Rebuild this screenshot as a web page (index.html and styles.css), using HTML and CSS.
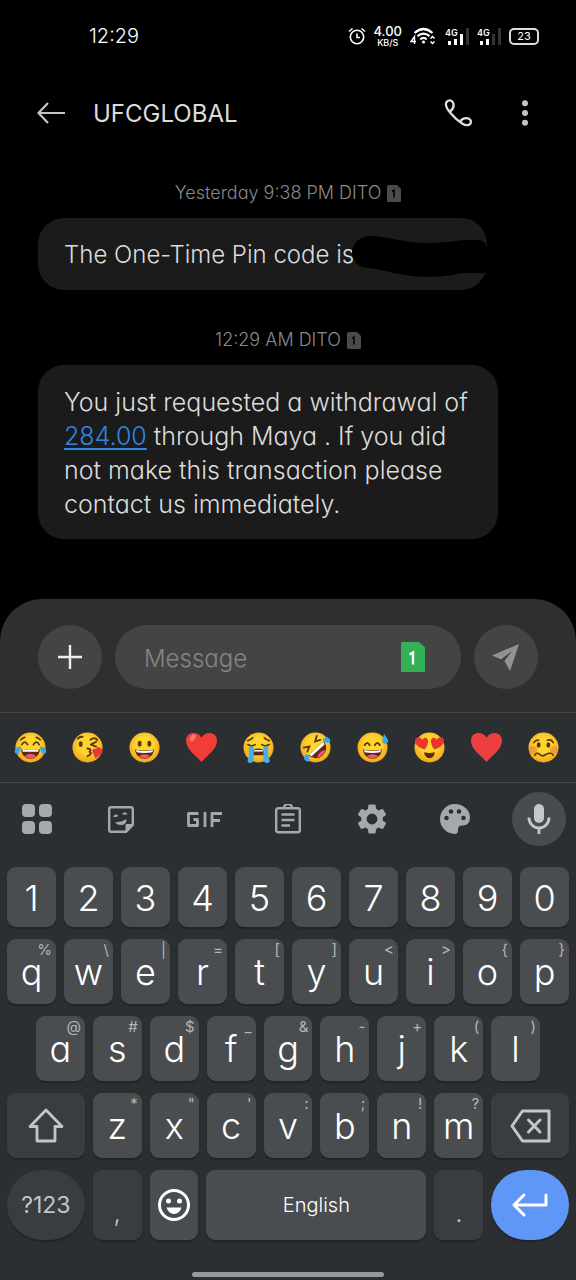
FILE: index.html
```html
<!DOCTYPE html>
<html lang="en">
<head>
<meta charset="utf-8">
<meta name="viewport" content="width=device-width, initial-scale=1">
<title>UFCGLOBAL</title>
<link rel="stylesheet" href="styles.css">
</head>
<body>
<svg class="defs" aria-hidden="true">
  <defs>
    <radialGradient id="skin" cx="50%" cy="42%" r="56%"><stop offset="0.5" stop-color="#fdd52d"/><stop offset="1" stop-color="#f3a81d"/></radialGradient>
    <symbol id="face" viewBox="0 0 32 32"><circle cx="16" cy="16" r="15.500" fill="url(#skin)"/></symbol>
    <symbol id="sim" viewBox="0 0 14 17"><path d="M1.500 0H10L14 4V15.500Q14 17 12.500 17H1.500Q0 17 0 15.500V1.500Q0 0 1.500 0Z" fill="#4a4a4a"/><path d="M5 6.500L7 5.200V12.500" fill="none" stroke="#080808" stroke-width="1.700"/></symbol>
  </defs>
</svg>

<header class="status">
  <time class="clock">12:29</time>
  <div class="status-icons">
    <svg width="18" height="18" viewBox="0 0 18 18" fill="none" stroke="#fff" stroke-width="1.600"><circle cx="9" cy="10" r="6.700"/><path d="M9 6.500V10.500H12M1 4.500L4.500 1.500M17 4.500L13.500 1.500"/></svg>
    <div class="speed"><b>4.00</b><span>KB/S</span></div>
    <svg width="27" height="18" viewBox="0 0 27 18" fill="none" stroke="#fff"><path d="M4.500 6Q13.500-2 22.500 6M7.500 9.200Q13.500 4 19.500 9.200M10.300 12.300Q13.500 9.600 16.700 12.300" stroke-width="2.200"/><circle cx="13.500" cy="15" r="1.600" fill="#fff" stroke="none"/><path d="M4.500 17V9.500L1 14.500H6" stroke-width="1.400"/><path d="M20.500 11.500L22.500 9.500L24.500 11.500M20.500 14.500L22.500 16.500L24.500 14.500" stroke-width="1.500"/></svg>
    <div class="signal"><span>4G</span><svg width="24" height="17" viewBox="0 0 24 17" fill="#fff"><path d="M3 13H6V17H3ZM9 11H12V17H9ZM15 6H18V17H15Z"/><path fill="#333" d="M21 0H24V17H21Z"/></svg></div>
    <div class="signal"><span>4G</span><svg width="24" height="17" viewBox="0 0 24 17" fill="#fff"><path d="M3 13H6V17H3ZM9 11H12V17H9Z"/><path fill="#333" d="M15 6H18V17H15ZM21 0H24V17H21Z"/></svg></div>
    <div class="battery">23</div>
  </div>
</header>

<nav class="topbar">
  <button class="plain" aria-label="Back"><svg width="28" height="22" viewBox="0 0 28 22" fill="none" stroke="#c4c4c4" stroke-width="2.200"><path d="M28 11H1.500M11 1L1.500 11L11 21"/></svg></button>
  <h1>UFCGLOBAL</h1>
  <button class="plain call" aria-label="Call"><svg width="28" height="28" viewBox="0 0 28 28" fill="none" stroke="#dedede" stroke-width="2.300" stroke-linecap="round" stroke-linejoin="round"><path d="M6.500 12C9.500 9.500 10.300 6.500 9 3.600C7.700 1 4.700.7 2.900 2.600C.7 5 2.700 9.500 6.500 14C10 18.200 14.500 22.300 18.500 24.800C22 27 26 26.600 26.800 23.600C27.500 20.700 24.500 18.900 21.500 19.200C19 19.500 17.300 20.700 16 22.800"/></svg></button>
  <button class="plain more" aria-label="More"><svg width="8" height="26" viewBox="0 0 8 26" fill="#c4c4c4"><circle cx="4" cy="3.200" r="3"/><circle cx="4" cy="13" r="3"/><circle cx="4" cy="22.800" r="3"/></svg></button>
</nav>

<main class="chat">
  <p class="stamp">Yesterday 9:38 PM DITO <svg width="14" height="17"><use href="#sim"/></svg></p>
  <div class="bubble redacted">The One-Time Pin code is
    <svg class="scribble" width="136" height="44" viewBox="0 0 136 44"><path fill="#000" d="M18 2C36 2 52 9 78 9C98 9 112 5 128 6C134 7 136 11 136 18V39H112C96 43 72 44 54 41C40 39 30 35 17 34C6 33 1 26 1 18C2 9 8 3 18 2Z"/></svg>
  </div>
  <p class="stamp">12:29 AM DITO <svg width="14" height="17"><use href="#sim"/></svg></p>
  <div class="bubble long">You just requested a withdrawal of <a href="#">284.00</a> through Maya . If you did not make this transaction please contact us immediately.</div>
</main>

<form class="composer">
  <button type="button" class="round" aria-label="Add"><svg width="26" height="26" viewBox="0 0 26 26" stroke="#eee" stroke-width="2.400"><path d="M13 1V25M1 13H25"/></svg></button>
  <div class="field">
    <input type="text" placeholder="Message" aria-label="Message">
    <button type="button" class="plain" aria-label="SIM 1"><svg width="24" height="30" viewBox="0 0 24 30"><path fill="#34b057" d="M1.500 0H18L24 5.500V28.500Q24 30 22.500 30H1.500Q0 30 0 28.500V1.500Q0 0 1.500 0Z"/><path d="M8.500 12.500L12 10.500V22.500" fill="none" stroke="#fff" stroke-width="2.400"/></svg></button>
  </div>
  <button type="button" class="round" aria-label="Send"><svg width="28" height="28" viewBox="0 0 28 28" fill="#929292"><path d="M27 1L0 12.500L9 16.200L20 8L12.500 18L18 28Z"/></svg></button>
</form>

<section class="keyboard">
  <div class="emojis">
    <button aria-label="Tears of joy"><svg viewBox="0 0 32 32"><use href="#face"/><path d="M6 18H26Q24 27.500 16 27.500T6 18Z" fill="#5b2a16"/><path d="M7.500 18H24.500L24 20.500H8Z" fill="#fff"/><path d="M10 25Q16 20 22 25Q16 29 10 25Z" fill="#ec5870"/><path d="M7 13Q10 8 13 13M19 13Q22 8 25 13M6 8Q8 6 10 5.500M26 8Q24 6 22 5.500" fill="none" stroke="#5b3510" stroke-width="1.800" stroke-linecap="round"/><path d="M6 15C1 15-1 19 0 21.500C2 24 6 22 6 15ZM26 15C31 15 33 19 32 21.500C30 24 26 22 26 15Z" fill="#37a9e8"/></svg></button>
    <button aria-label="Blowing a kiss"><svg viewBox="0 0 32 32"><use href="#face"/><ellipse cx="9" cy="12.500" rx="2" ry="3" fill="#5b3510"/><path d="M25 10L19.500 13L25 15M6 7Q8 4.500 11 5M19 8Q23 5 26 8M16 17Q21 17.500 18 20.500Q22 22 16 25" fill="none" stroke="#5b3510" stroke-width="1.900" stroke-linecap="round" stroke-linejoin="round"/><path d="M24 27L21 20Q21 16 24.500 17.500Q27 13.500 30 17Q33 17 31 21Q29 25 24 27Z" fill="#e53b36"/></svg></button>
    <button aria-label="Grinning"><svg viewBox="0 0 32 32"><use href="#face"/><ellipse cx="11" cy="12" rx="2" ry="3" fill="#5b3510"/><ellipse cx="21" cy="12" rx="2" ry="3" fill="#5b3510"/><path d="M6 18Q16 20 26 18Q24 27.500 16 27.500T6 18Z" fill="#5b2a16"/><path d="M7 18.500Q16 20.500 25 18.500L24 21Q16 22.500 8 21Z" fill="#fff"/><path d="M10 25Q16 21 22 25Q16 29 10 25Z" fill="#ec5870"/></svg></button>
    <button aria-label="Red heart"><svg viewBox="0 0 32 32"><path d="M16 31C11 25 0 18 0 9C0-1 13-1 16 6C19-1 32-1 32 9C32 18 21 25 16 31Z" fill="#ef3e36"/><ellipse cx="7" cy="6" rx="2.500" ry="4" transform="rotate(35 7 6)" fill="#ff7770"/></svg></button>
    <button aria-label="Loudly crying"><svg viewBox="0 0 32 32"><use href="#face"/><path d="M9 24Q9 17 16 17T23 24Z" fill="#5b2a16"/><path d="M12 18.500H20L21 20H11Z" fill="#fff"/><path d="M5 13Q9 15.500 12.500 13M19.500 13Q23 15.500 27 13M5 9Q8 8.500 10 6M27 9Q24 8.500 22 6" fill="none" stroke="#5b3510" stroke-width="1.800" stroke-linecap="round"/><path d="M6 15H11V29Q10 32 7 32Q3 31 6 26ZM21 15H26V26Q30 31 25 32Q22 32 21 29Z" fill="#3fb2ef"/></svg></button>
    <button aria-label="Rolling on the floor"><svg viewBox="0 0 32 32"><use href="#face"/><g transform="rotate(-42 16 16)"><path d="M5 17H27Q25 27 16 27T5 17Z" fill="#5b2a16"/><path d="M6 17H26L25 20H7Z" fill="#fff"/><path d="M10 25Q16 21 22 25Q16 28 10 25Z" fill="#ec5870"/><path d="M7 8L12 11L7 13.500M25 8L20 11L25 13.500" fill="none" stroke="#5b3510" stroke-width="1.900" stroke-linecap="round"/><path d="M5 15C0 14-2 18 0 21C2 23 5 21 5 15ZM27 15C32 14 34 18 32 21C30 23 27 21 27 15Z" fill="#37a9e8"/></g></svg></button>
    <button aria-label="Grinning with sweat"><svg viewBox="0 0 32 32"><use href="#face"/><path d="M6 18Q16 20 26 18Q24 27.500 16 27.500T6 18Z" fill="#5b2a16"/><path d="M7 18.500Q16 20.500 25 18.500L24 21Q16 22.500 8 21Z" fill="#fff"/><path d="M10 25Q16 21 22 25Q16 29 10 25Z" fill="#ec5870"/><path d="M8 13.500Q10.500 9 13 13.500M18.500 13.500Q21 9 23.500 13.500" fill="none" stroke="#5b3510" stroke-width="2" stroke-linecap="round"/><path d="M28 2Q33 8 32 10.500Q30 13.500 27 11.500Q25 9 28 2Z" fill="#37a9e8"/></svg></button>
    <button aria-label="Heart eyes"><svg viewBox="0 0 32 32"><use href="#face"/><path d="M11 18C5 16 1 13 1 9C2 4 7 5 8.500 8C11 4 15 6 14.500 10Q14 15 11 18ZM21 18C27 16 31 13 31 9C30 4 25 5 23.500 8C21 4 17 6 17.500 10Q18 15 21 18Z" fill="#e9352f"/><path d="M10.500 21Q16 22.500 21.500 21Q21 27 16 27T10.500 21Z" fill="#5b2a16"/></svg></button>
    <button aria-label="Heart suit"><svg viewBox="0 0 32 32"><path d="M16 31C11 25 0 18 0 9C0-1 13-1 16 6C19-1 32-1 32 9C32 18 21 25 16 31Z" fill="#eb3f40"/></svg></button>
    <button aria-label="Woozy"><svg viewBox="0 0 32 32"><use href="#face"/><circle cx="5.500" cy="18.500" r="4" fill="#f2803a" opacity=".6"/><circle cx="26.500" cy="18.500" r="4" fill="#f2803a" opacity=".6"/><ellipse cx="11" cy="13.500" rx="2" ry="2.800" fill="#5b3510"/><ellipse cx="21" cy="13.500" rx="2" ry="2.800" fill="#5b3510"/><path d="M6 11Q8 8 11 8.500M26 11Q24 7 20 8.500M7 24Q9 20.500 12 23T17 24T22 22T26 24" fill="none" stroke="#5b3510" stroke-width="1.700" stroke-linecap="round"/></svg></button>
  </div>

  <div class="tools">
    <button aria-label="Menu"><svg width="30" height="30" viewBox="0 0 30 30" fill="#a6a9ab"><rect width="13" height="13" rx="4"/><rect x="17" width="13" height="13" rx="4"/><rect y="17" width="13" height="13" rx="4"/><rect x="17" y="17" width="13" height="13" rx="4"/></svg></button>
    <button aria-label="Stickers"><svg width="26" height="27" viewBox="0 0 26 27" fill="none" stroke="#a6a9ab" stroke-width="2.400" stroke-linejoin="round"><path d="M3 1.200H23Q24.800 1.200 24.800 3V19L18 25.800H3Q1.200 25.800 1.200 24V3Q1.200 1.200 3 1.200Z"/><path d="M24.500 18.500H18V25.500Z" fill="#a6a9ab" stroke-width="1"/><path d="M6 11Q7.500 8.500 9.500 10.500M15 8.500Q17 6 18.500 8.500" stroke-width="2"/><path d="M7 16.500Q14 16 18.500 13Q18.500 19 13 19Q9 19 7 16.500Z" fill="#a6a9ab" stroke="none"/></svg></button>
    <button aria-label="GIF"><svg width="35" height="15" viewBox="0 0 35 15" fill="none" stroke="#a6a9ab" stroke-width="2.800" stroke-linejoin="round"><path d="M11.500 1.500H1.500V13.500H10.500V7.500H6.500M18 0V15M25 15V1.500H35M25 8.500H33"/></svg></button>
    <button aria-label="Clipboard"><svg width="26" height="30" viewBox="0 0 26 30" fill="none" stroke="#a6a9ab" stroke-width="2.400"><rect x="1.200" y="4.200" width="23.600" height="24" rx="2"/><path d="M9 4A4 4 0 0 1 17 4" /><path d="M6.500 10.500H19.500M6.500 16H19.500M6.500 21.500H15"/></svg></button>
    <button aria-label="Settings"><svg width="36" height="36" viewBox="0 0 24 24" fill="#a6a9ab"><path d="M19.140 12.940c.04-.3.060-.61.060-.94s-.02-.64-.07-.94l2.030-1.580a.49.49 0 0 0 .12-.61l-1.920-3.320a.49.49 0 0 0-.59-.22l-2.390.96a7 7 0 0 0-1.620-.94l-.36-2.540a.48.48 0 0 0-.48-.41h-3.840a.47.47 0 0 0-.47.41l-.36 2.540a7.400 7.400 0 0 0-1.620.94l-2.390-.96a.47.47 0 0 0-.59.22L2.740 8.870a.48.48 0 0 0 .12.610l2.030 1.580a6 6 0 0 0 0 1.880l-2.030 1.580a.49.49 0 0 0-.12.610l1.920 3.320c.12.220.37.290.59.220l2.390-.96c.5.380 1.030.7 1.620.94l.36 2.540c.05.240.24.410.48.410h3.840c.24 0 .44-.17.470-.41l.36-2.540a7.400 7.400 0 0 0 1.620-.94l2.390.96c.22.080.47 0 .59-.22l1.920-3.320a.47.47 0 0 0-.12-.61zM12 15.600a3.600 3.600 0 1 1 0-7.200 3.600 3.600 0 0 1 0 7.200z"/></svg></button>
    <button aria-label="Theme"><svg width="30" height="30" viewBox="0 0 30 30"><path d="M15 0A15 15 0 0 0 15 30Q18 30 18 26.500Q17.500 21.500 22 21.500Q30 22 30 13C30 6 23 0 15 0Z" fill="#a6a9ab"/><g fill="#2b2f32"><circle cx="6.500" cy="14" r="2.300"/><circle cx="11" cy="7.500" r="2.300"/><circle cx="19" cy="7.500" r="2.300"/><circle cx="23.500" cy="14" r="2.300"/></g></svg></button>
    <button class="mic" aria-label="Voice input"><svg width="24" height="32" viewBox="0 0 24 32" fill="none" stroke="#c5c7c8" stroke-width="2.800"><rect x="7" y="1" width="10" height="19" rx="5" fill="#c5c7c8" stroke="none"/><path d="M2 14.500V15A10 10 0 0 0 22 15V14.500M12 25V31"/></svg></button>
  </div>

  <div class="keys">
    <div class="row numbers"><button>1</button><button>2</button><button>3</button><button>4</button><button>5</button><button>6</button><button>7</button><button>8</button><button>9</button><button>0</button></div>
    <div class="row"><button>q<small>%</small></button><button>w<small>\</small></button><button>e<small>|</small></button><button>r<small>=</small></button><button>t<small>[</small></button><button>y<small>]</small></button><button>u<small>&lt;</small></button><button>i<small>&gt;</small></button><button>o<small>{</small></button><button>p<small>}</small></button></div>
    <div class="row inset"><button>a<small>@</small></button><button>s<small>#</small></button><button>d<small>$</small></button><button>f<small>_</small></button><button>g<small>&amp;</small></button><button>h<small>-</small></button><button>j<small>+</small></button><button>k<small>(</small></button><button>l<small>)</small></button></div>
    <div class="row"><button class="wide dark" aria-label="Shift"><svg width="36" height="35" viewBox="0 0 36 35" fill="none" stroke="#c3c6c8" stroke-width="2.800" stroke-linejoin="round"><path d="M18 2L34 18.500H27V33H9V18.500H2Z"/></svg></button><button>z<small>*</small></button><button>x<small>"</small></button><button>c<small>'</small></button><button>v<small>:</small></button><button>b<small>;</small></button><button>n<small>!</small></button><button>m<small>?</small></button><button class="wide dark" aria-label="Backspace"><svg width="41" height="34" viewBox="0 0 41 34" fill="none" stroke="#c3c6c8" stroke-width="3" stroke-linejoin="round" stroke-linecap="round"><path d="M12.500 2H39V32H12.500L2 17ZM18.500 11L30 23M30 11L18.500 23"/></svg></button></div>
    <div class="row bottom"><button class="wide dark pill">?123</button><button class="dark mark">,</button><button aria-label="Emoji"><svg width="32" height="32" viewBox="0 0 32 32"><circle cx="16" cy="16" r="14.500" fill="none" stroke="#fff" stroke-width="3"/><circle cx="10.500" cy="12" r="2.500" fill="#fff"/><circle cx="21.500" cy="12" r="2.500" fill="#fff"/><path d="M8.500 18.500H23.500Q21.500 25 16 25T8.500 18.500Z" fill="#fff"/></svg></button><button class="space">English</button><button class="dark mark">.</button><button class="wide pill enter" aria-label="Enter"><svg width="36" height="24" viewBox="0 0 36 24" fill="none" stroke="#fff" stroke-width="3" stroke-linecap="round" stroke-linejoin="round"><path d="M34 2V12H2M12 2L2 12L12 22"/></svg></button></div>
  </div>
  <div class="home"></div>
</section>
</body>
</html>
```
FILE: styles.css
```css
* { box-sizing: border-box; }

body {
  margin: 0;
  min-height: 100vh;
  display: flex;
  flex-direction: column;
  background: #000;
  color: #dcdcdc;
  font-family: Inter, "Noto Sans", sans-serif;
  font-weight: 300;
  font-feature-settings: "cv11";
}

button, input {
  margin: 0;
  padding: 0;
  border: 0;
  background: none;
  color: inherit;
  font: inherit;
  font-feature-settings: inherit;
}

svg { display: block; flex: none; }
.defs { position: absolute; width: 0; height: 0; }
.plain { display: flex; align-items: center; }

.status {
  height: 72px;
  padding: 0 37px 0 89px;
  display: flex;
  align-items: center;
  justify-content: space-between;
  color: #fff;
}
.clock { font-size: 20px; }
.status-icons { display: flex; align-items: center; gap: 8px; }
.speed {
  display: flex;
  flex-direction: column;
  align-items: center;
  font-size: 9px;
  font-weight: 500;
  line-height: 10px;
}
.speed b { font-size: 13px; line-height: 13px; font-weight: 500; }
.signal { position: relative; }
.signal span { position: absolute; left: 0; top: 0; font-size: 9px; line-height: 9px; font-weight: 600; }
.battery {
  width: 30px;
  height: 17px;
  border: 2px solid #ddd;
  border-radius: 5px;
  font-size: 11px;
  line-height: 13px;
  font-weight: 400;
  text-align: center;
}

.topbar {
  height: 82px;
  padding: 0 47px 0 37px;
  display: flex;
  align-items: center;
}
h1 { flex: 1; margin: 0 0 0 28px; font-size: 24px; font-weight: 400; }
.more { margin-left: 49px; }

.chat {
  flex: 1;
  padding: 27px 38px 0;
  display: flex;
  flex-direction: column;
  align-items: flex-start;
}
.stamp {
  align-self: center;
  margin: 0 0 13px;
  display: flex;
  align-items: center;
  gap: 6px;
  font-size: 18px;
  line-height: 24px;
  color: #8a8a8a;
}
.bubble {
  position: relative;
  max-width: 92%;
  margin-bottom: 38px;
  padding: 20px 26px 18px;
  border-radius: 26px;
  background: #1b1b1b;
  font-size: 24px;
  line-height: 34px;
}
.long { font-size: 25px; }
.bubble a { color: #2e86e0; text-underline-offset: 3px; text-decoration-thickness: 2px; }
.redacted { padding-right: 133px; }
.scribble { position: absolute; right: 0; top: 16px; }

.composer {
  padding: 26px 38px 23px;
  display: flex;
  gap: 13px;
  background: #2f2f2f;
  border-radius: 42px 42px 0 0;
}
.round {
  width: 64px;
  height: 64px;
  border-radius: 50%;
  display: grid;
  place-items: center;
  background: #444;
}
.field {
  flex: 1;
  min-width: 0;
  display: flex;
  align-items: center;
  padding: 0 36px 0 29px;
  border-radius: 32px;
  background: #444;
}
.field input { flex: 1; min-width: 0; padding-top: 2px; font-size: 24px; outline: none; }
.field input::placeholder { color: #858585; opacity: 1; }

.keyboard { background: #2b2f32; border-top: 1px solid #414548; }
.emojis {
  height: 70px;
  padding: 0 4px 0 2px;
  display: grid;
  grid-template-columns: repeat(10, 1fr);
  border-bottom: 1px solid #414548;
}
.emojis button { display: grid; place-items: center; }
.emojis svg { width: 31px; height: 31px; overflow: visible; }

.tools {
  height: 72px;
  padding: 0 10px;
  display: flex;
  align-items: center;
  justify-content: space-between;
}
.tools button { width: 54px; height: 54px; display: grid; place-items: center; border-radius: 50%; }
.tools .mic { background: #484c4f; }

.keys { padding: 12px 7px 0; display: grid; gap: 12px; }
.row { display: flex; gap: 8px; height: 65px; }
.numbers { height: 60px; }
.inset { padding: 0 29px; }
.bottom { height: 70px; }
.row button {
  position: relative;
  flex: 49 1 0;
  min-width: 0;
  display: grid;
  place-items: center;
  border-radius: 9px;
  background: #494d50;
  box-shadow: 0 2px 1px #212527;
  color: #fff;
  font-size: 36px;
  line-height: 40px;
}
.numbers button { padding-top: 2px; }
.row .wide { flex-grow: 78; }
.row .space { flex-grow: 221; font-size: 20px; }
.row .dark { background: #373d40; color: #c3c6c8; }
.row .pill { border-radius: 35px; font-size: 23px; font-weight: 400; }
.row .enter { background: #5f97f6; }
.row .mark { padding-top: 16px; font-size: 26px; }
.row small {
  position: absolute;
  right: 4px;
  top: 2px;
  font-size: 15px;
  line-height: 18px;
  font-weight: 400;
  color: #b3b6b8;
}
.home { width: 192px; height: 5px; margin: 32px auto 3px; border-radius: 3px; background: #94989a; }
```
